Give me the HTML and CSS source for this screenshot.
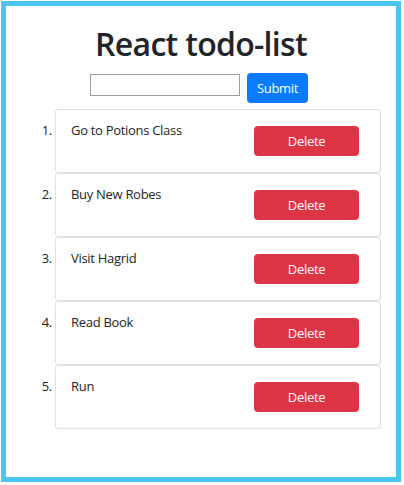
FILE: index.html
```html
<!DOCTYPE html>
<html lang="en">
<head>
<meta charset="utf-8">
<title>React todo-list</title>
<link rel="stylesheet" href="styles.css">
</head>
<body>
<div class="frame">
  <h1 class="title">React todo-list</h1>
  <form class="add-form" onsubmit="return false;">
    <input class="add-input" type="text" aria-label="New todo">
    <button class="btn btn-primary" type="submit">Submit</button>
  </form>
  <ol class="todo-list">
    <li class="todo-item"><div class="todo-row"><span class="todo-text">Go to Potions Class</span><button class="btn btn-danger" type="button">Delete</button></div></li>
    <li class="todo-item"><div class="todo-row"><span class="todo-text">Buy New Robes</span><button class="btn btn-danger" type="button">Delete</button></div></li>
    <li class="todo-item"><div class="todo-row"><span class="todo-text">Visit Hagrid</span><button class="btn btn-danger" type="button">Delete</button></div></li>
    <li class="todo-item"><div class="todo-row"><span class="todo-text">Read Book</span><button class="btn btn-danger" type="button">Delete</button></div></li>
    <li class="todo-item"><div class="todo-row"><span class="todo-text">Run</span><button class="btn btn-danger" type="button">Delete</button></div></li>
  </ol>
</div>
</body>
</html>
```
FILE: styles.css
```css
* { box-sizing: border-box; }
html, body { margin: 0; padding: 0; background: #fff; }
body {
  font-family: "Open Sans", "Noto Sans", sans-serif;
  font-size: 13px;
  letter-spacing: -0.3px;
  line-height: 21px;
  color: #212529;
}
.frame {
  margin: 1px;
  width: 400px;
  height: 481px;
  border: 5px solid #4cc6f0;
}
.title {
  margin: 18px 0 0;
  font-size: 32px;
  line-height: 40px;
  font-weight: 600;
  letter-spacing: -0.7px;
  text-align: center;
  color: #212529;
}
.add-form {
  display: flex;
  justify-content: center;
  align-items: flex-start;
  gap: 7px;
  margin-top: 9px;
  padding-right: 4px;
}
.add-input {
  margin-top: 1px;
  width: 150px;
  height: 22px;
  border: 1px solid #9e9e9e;
  padding: 1px 2px;
  font: inherit;
}
.btn {
  border: none;
  font-family: inherit;
  font-size: 13px;
  letter-spacing: -0.3px;
  color: #fff;
  cursor: pointer;
  border-radius: 4px;
}
.btn-primary {
  background: #087bfe;
  width: 61px;
  height: 30px;
  padding: 0;
}
.btn-danger {
  background: #dc3545;
  width: 105px;
  height: 30px;
  padding: 0;
}
.todo-list {
  margin: 6px 15px 0 0;
  padding: 0 0 0 49px;
}
.todo-item {
  height: 64px;
  border: 1px solid #dfdfdf;
  border-radius: 3px;
  padding: 10px 21px 0 15px;
}
.todo-row {
  display: flex;
  justify-content: space-between;
  align-items: flex-start;
}
.todo-text {
  display: block;
}
.todo-row .btn-danger {
  margin-top: 6px;
}
```
